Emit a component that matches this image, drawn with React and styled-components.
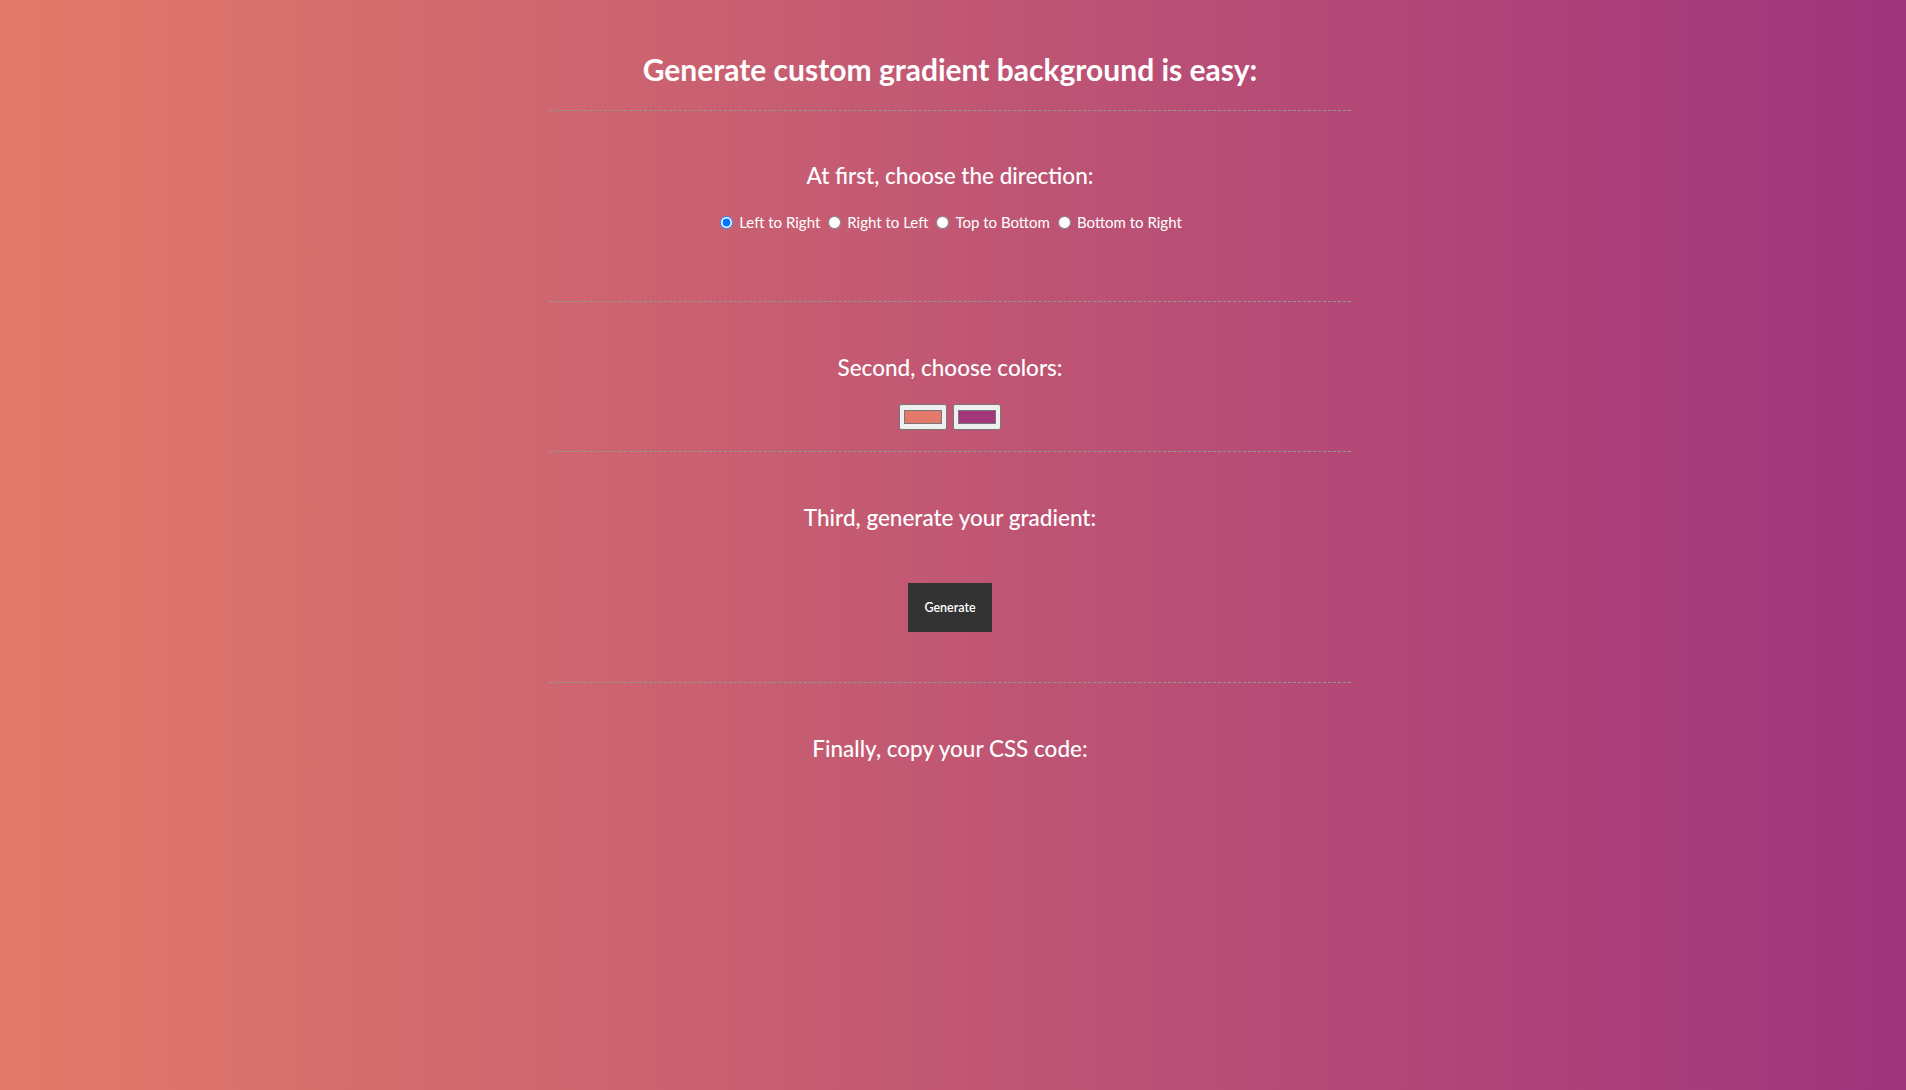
import styled, { createGlobalStyle } from "styled-components"

const GlobalStyle = createGlobalStyle`
  html, body {
    margin: 0;
    padding: 0;
  }
  body {
    font-family: "Source Sans Pro", Lato, "Noto Sans", sans-serif;
    color: #fff;
  }
`

const Page = styled.div`
  min-height: 100vh;
  background: linear-gradient(to right, #e27a69, #a0347d);
  overflow: hidden;
`

const Container = styled.div`
  width: 802px;
  margin: 0 auto;
  padding-top: 49px;
  text-align: center;
  position: relative;
  left: -3px;
`

const Title = styled.h1`
  margin: 0;
  font-size: 30px;
  line-height: 40px;
  font-weight: 700;
`

const Divider = styled.hr`
  margin: ${props => props.top || 0}px 0 0 0;
  border: 0;
  border-top: 1px dashed #8f9b93;
  height: 0;
`

const Section = styled.section`
  padding-top: ${props => props.top}px;
  padding-bottom: ${props => props.bottom}px;
`

const Heading = styled.h2`
  margin: 0;
  font-size: 22.5px;
  line-height: 30px;
  font-weight: 500;
`

const Row = styled.div`
  margin-top: ${props => props.top}px;
  display: flex;
  justify-content: center;
  align-items: center;
  gap: ${props => props.gap || 0}px;
`

const RadioLabel = styled.label`
  display: inline-flex;
  align-items: center;
  font-size: 15px;
  line-height: 20px;
  margin-right: 3px;
`

const Radio = styled.input`
  width: 13px;
  height: 13px;
  margin: 0 6px 0 5px;
`

const ColorPick = styled.input`
  width: 48px;
  height: 26px;
  margin: 0;
  padding: 1px 2px;
  cursor: pointer;
`

const Button = styled.button`
  background: #333;
  color: #fff;
  border: 0;
  font-family: inherit;
  font-size: 12.5px;
  font-weight: 600;
  line-height: 17px;
  padding: 16px 16px;
  cursor: pointer;
`

const directions = ["Left to Right", "Right to Left", "Top to Bottom", "Bottom to Right"]

export default function App() {
  return (
    <Page>
      <GlobalStyle />
      <Container>
        <Title>Generate custom gradient background is easy:</Title>
        <Divider top={21} />
        <Section top={50} bottom={69}>
          <Heading>At first, choose the direction:</Heading>
          <Row top={21}>
            {directions.map((d, i) => (
              <RadioLabel key={d}>
                <Radio type="radio" name="direction" defaultChecked={i === 0} />
                {d}
              </RadioLabel>
            ))}
          </Row>
        </Section>
        <Divider />
        <Section top={51} bottom={21}>
          <Heading>Second, choose colors:</Heading>
          <Row top={21} gap={6}>
            <ColorPick type="color" defaultValue="#e2796b" />
            <ColorPick type="color" defaultValue="#a3367b" />
          </Row>
        </Section>
        <Divider />
        <Section top={51} bottom={50}>
          <Heading>Third, generate your gradient:</Heading>
          <Row top={50}>
            <Button>Generate</Button>
          </Row>
        </Section>
        <Divider />
        <Section top={51} bottom={0}>
          <Heading>Finally, copy your CSS code:</Heading>
        </Section>
      </Container>
    </Page>
  )
}
